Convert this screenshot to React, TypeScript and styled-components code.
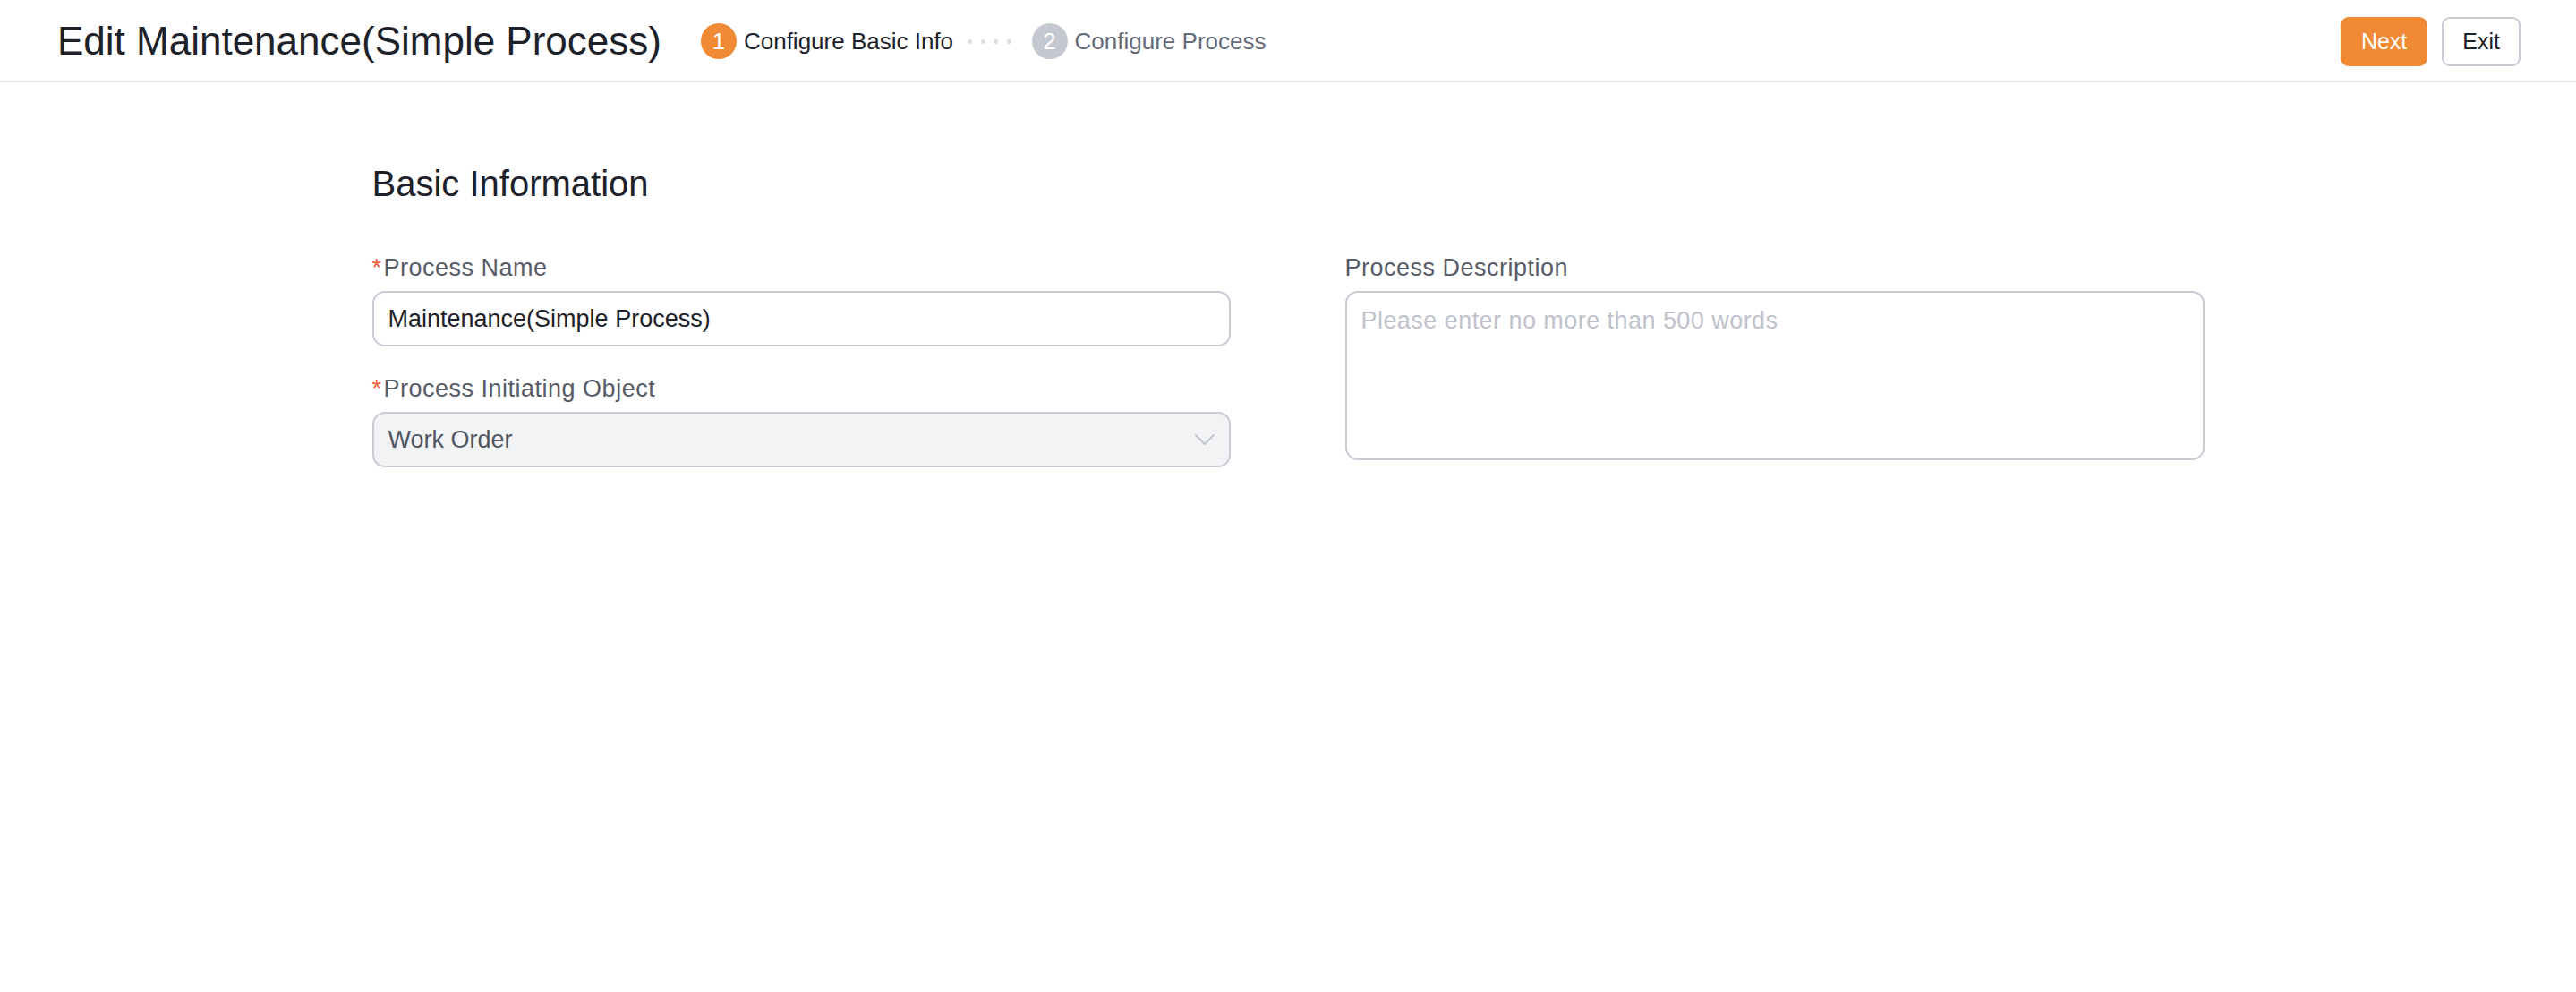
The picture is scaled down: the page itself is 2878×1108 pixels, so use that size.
import React from "react";
import styled, { createGlobalStyle } from "styled-components";

const GlobalStyle = createGlobalStyle`
  html, body {
    margin: 0;
    padding: 0;
    background: #ffffff;
    font-family: "Liberation Sans", Arial, sans-serif;
  }
  * { box-sizing: border-box; }
`;

const Page = styled.div`
  min-height: 1108px;
  background: #ffffff;
`;

const Header = styled.header`
  height: 92px;
  padding: 2px 62px 0 64px;
  border-bottom: 2px solid #e5e8ef;
  display: flex;
  align-items: center;
`;

const Title = styled.h1`
  margin: 0;
  font-size: 44px;
  line-height: 60px;
  font-weight: 400;
  color: #1d2129;
  white-space: nowrap;
`;

const Steps = styled.div`
  display: flex;
  align-items: center;
  margin-left: 44px;
`;

const Step = styled.div`
  display: flex;
  align-items: center;
  gap: 8px;
`;

const StepCircle = styled.span<{ $active?: boolean }>`
  width: 40px;
  height: 40px;
  border-radius: 50%;
  background: ${(p) => (p.$active ? "#f08a35" : "#c5c8d0")};
  color: #ffffff;
  font-size: 26px;
  line-height: 40px;
  text-align: center;
`;

const StepLabel = styled.span<{ $active?: boolean }>`
  font-size: 26px;
  line-height: 36px;
  color: ${(p) => (p.$active ? "#1d2129" : "#646a78")};
  white-space: nowrap;
`;

const Dots = styled.div`
  display: flex;
  align-items: center;
  gap: 9.5px;
  margin: 0 23px 0 16px;
`;

const Dot = styled.span`
  width: 5px;
  height: 5px;
  border-radius: 50%;
  background: #dcdfe5;
`;

const Actions = styled.div`
  margin-left: auto;
  display: flex;
  align-items: center;
  gap: 16px;
`;

const Button = styled.button<{ $primary?: boolean }>`
  height: 55px;
  padding: 0 ${(p) => (p.$primary ? "21px" : "21px")};
  border-radius: 9px;
  font-family: "Liberation Sans", Arial, sans-serif;
  font-size: 25px;
  line-height: 1;
  cursor: pointer;
  border: 2px solid ${(p) => (p.$primary ? "#f08a35" : "#c9ccd5")};
  background: ${(p) => (p.$primary ? "#f08a35" : "#ffffff")};
  color: ${(p) => (p.$primary ? "#ffffff" : "#1d2129")};
`;

const Content = styled.main`
  width: 2047px;
  margin: 0 auto;
  padding-top: 87px;
`;

const SectionTitle = styled.h2`
  margin: 0 0 50px;
  font-size: 40px;
  line-height: 52px;
  font-weight: 400;
  color: #1d2129;
`;

const Grid = styled.div`
  display: grid;
  grid-template-columns: 959px 960px;
  column-gap: 128px;
  align-items: start;
`;

const Column = styled.div`
  display: flex;
  flex-direction: column;
  gap: 29px;
`;

const Field = styled.div`
  display: flex;
  flex-direction: column;
  gap: 8px;
`;

const Label = styled.label`
  font-size: 27px;
  line-height: 36px;
  letter-spacing: 0.5px;
  color: #575c68;
  display: flex;
  align-items: center;
`;

const Required = styled.span`
  color: #f5603c;
  margin-right: 2px;
`;

const TextInput = styled.input`
  height: 62px;
  width: 100%;
  border: 2px solid #c9ccd5;
  border-radius: 14px;
  padding: 0 16px;
  font-family: "Liberation Sans", Arial, sans-serif;
  font-size: 27px;
  color: #1d2129;
  background: #ffffff;
  outline: none;
`;

const SelectBox = styled.div`
  height: 62px;
  border: 2px solid #c9ccd5;
  border-radius: 14px;
  padding: 0 16px;
  background: #f2f3f5;
  display: flex;
  align-items: center;
  justify-content: space-between;
  font-size: 27px;
  color: #515663;
`;

const TextArea = styled.textarea`
  height: 189px;
  width: 100%;
  border: 2px solid #c9ccd5;
  border-radius: 14px;
  padding: 13px 16px;
  font-family: "Liberation Sans", Arial, sans-serif;
  font-size: 27px;
  letter-spacing: 0.45px;
  line-height: 36px;
  resize: none;
  outline: none;
  color: #1d2129;
  &::placeholder {
    color: #c0c3cc;
  }
`;

const Chevron = () => (
  <svg width="22" height="12" viewBox="0 0 22 12" fill="none">
    <polyline points="1,1 11,11 21,1" stroke="#c0c3cc" strokeWidth="2" strokeLinejoin="round" strokeLinecap="round" />
  </svg>
);

export default function App() {
  return (
    <Page>
      <GlobalStyle />
      <Header>
        <Title>Edit Maintenance(Simple Process)</Title>
        <Steps>
          <Step>
            <StepCircle $active>1</StepCircle>
            <StepLabel $active>Configure Basic Info</StepLabel>
          </Step>
          <Dots>
            <Dot />
            <Dot />
            <Dot />
            <Dot />
          </Dots>
          <Step>
            <StepCircle>2</StepCircle>
            <StepLabel>Configure Process</StepLabel>
          </Step>
        </Steps>
        <Actions>
          <Button $primary>Next</Button>
          <Button>Exit</Button>
        </Actions>
      </Header>
      <Content>
        <SectionTitle>Basic Information</SectionTitle>
        <Grid>
          <Column>
            <Field>
              <Label>
                <Required>*</Required>Process Name
              </Label>
              <TextInput defaultValue="Maintenance(Simple Process)" />
            </Field>
            <Field>
              <Label>
                <Required>*</Required>Process Initiating Object
              </Label>
              <SelectBox>
                <span>Work Order</span>
                <Chevron />
              </SelectBox>
            </Field>
          </Column>
          <Column>
            <Field>
              <Label>Process Description</Label>
              <TextArea placeholder="Please enter no more than 500 words" />
            </Field>
          </Column>
        </Grid>
      </Content>
    </Page>
  );
}
